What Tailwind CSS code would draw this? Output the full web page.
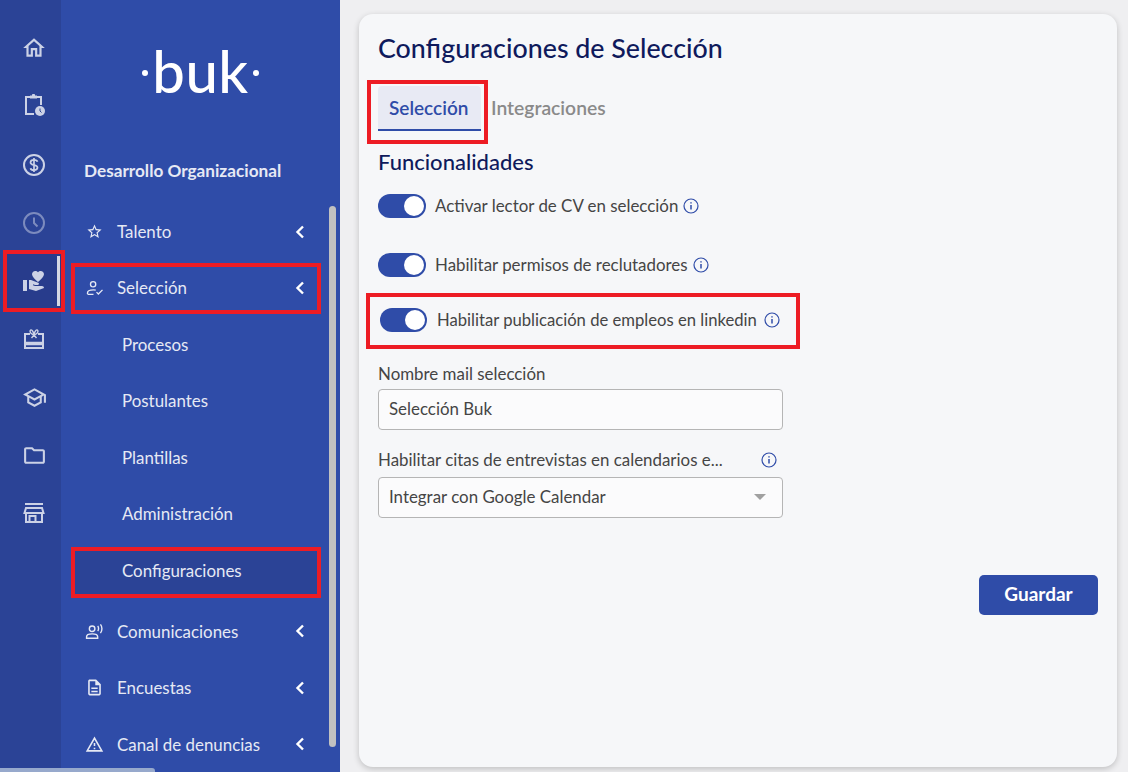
<!DOCTYPE html>
<html lang="es">
  <head>
    <meta charset="UTF-8" />
    <title>Configuraciones de Selección</title>
    <script src="https://cdn.jsdelivr.net/npm/@tailwindcss/browser@4"></script>
  </head>
  <body class="font-[Lato,sans-serif] bg-[#efeff1] overflow-hidden">
    <div class="relative flex w-[1128px] h-[772px] overflow-hidden">
      <!-- icon rail -->
      <aside class="w-[61px] h-full shrink-0 bg-[#2b4396] pl-[7px] pt-[20px] text-[#ccd2e6] flex flex-col">
        <div class="h-[56px] flex items-center justify-center">
          <svg class="w-[26px] h-[26px] fill-current" viewBox="0 0 24 24"><path d="M12 5.69l5 4.5V18h-2v-6H9v6H7v-7.81l5-4.5M12 3L2 12h3v8h6v-6h2v6h6v-8h3L12 3z" /></svg>
        </div>
        <div class="h-[58px] flex items-center justify-center">
          <svg class="w-[24px] h-[24px]" viewBox="0 0 24 24" fill="none" stroke="currentColor" stroke-width="2"><path d="M12 21H4V4h15v8" /><path d="M8 5V3h2.500V1.500h2V3H15v2z" fill="currentColor" stroke-width="1" /><circle cx="18" cy="18" r="5" fill="currentColor" stroke="none" /><path d="M18 15.500V18l1.500 1.500" stroke="#2b4396" stroke-width="1" /></svg>
        </div>
        <div class="mt-[2px] h-[58px] flex items-center justify-center">
          <svg class="w-[24px] h-[24px]" viewBox="0 0 24 24" fill="none" stroke="currentColor" stroke-width="2"><circle cx="12" cy="12" r="10" /><path d="M15.500 8.800c-.3-1.200-1.600-2-3.500-2-2 0-3.500 1-3.500 2.600 0 3.600 7 1.700 7 5.200 0 1.600-1.500 2.600-3.500 2.600-1.900 0-3.200-.8-3.500-2M12 5v14" stroke-width="1.700" /></svg>
        </div>
        <div class="h-[58px] flex items-center justify-center opacity-50">
          <svg class="w-[24px] h-[24px]" viewBox="0 0 24 24" fill="none" stroke="currentColor" stroke-width="2"><circle cx="12" cy="12" r="10" /><path d="M12 6.500V12l3.500 3.500" /></svg>
        </div>
        <div class="relative h-[58px] flex items-center justify-center bg-[#283c8c]">
          <svg class="w-[24px] h-[24px] fill-current" viewBox="0 0 24 24"><path d="M1 11h4v11H1zm15-7.750C16.650 2.490 17.660 2 18.700 2 20.550 2 22 3.450 22 5.300c0 2.270-2.910 4.900-6 7.700-3.080-2.810-6-5.440-6-7.700C10 3.450 11.450 2 13.300 2c1.040 0 2.050.49 2.700 1.250zM20 17h-7l-2.090-.73.33-.94L13 16h2.820c.65 0 1.180-.53 1.180-1.180 0-.49-.31-.93-.77-1.110L8.970 11H7v9.020L14 22l8.010-3c-.01-1.100-.9-2-2.010-2z" /></svg>
          <span class="absolute right-[1px] top-[4px] bottom-[4px] w-[3px] bg-[#d5d8e4]"></span>
        </div>
        <div class="h-[58px] flex items-center justify-center">
          <svg class="w-[24px] h-[24px]" viewBox="0 0 24 24" fill="none" stroke="currentColor" stroke-width="2"><path d="M8 7H3v14h18V7h-5" /><path d="M3 16.500h18" stroke-width="3.500" /><path d="M12 8C9.500 7 7.500 5.500 8.200 3.500 9 1.800 11.500 3.500 12 8c.5-4.500 3-6.200 3.800-4.500C16.500 5.500 14.500 7 12 8zM12 8l-2.500 3M12 8l2.500 3" stroke-width="1.400" /></svg>
        </div>
        <div class="h-[58px] flex items-center justify-center">
          <svg class="w-[25px] h-[25px] fill-current" viewBox="0 0 24 24"><path d="M12 3L1 9l4 2.180v6L12 21l7-3.820v-6l2-1.090V17h2V9L12 3zm6.820 6L12 12.720 5.180 9 12 5.280 18.820 9zM17 15.990l-5 2.730-5-2.730v-3.720L12 15l5-2.730v3.720z" /></svg>
        </div>
        <div class="h-[58px] flex items-center justify-center">
          <svg class="w-[25px] h-[25px] fill-current" viewBox="0 0 24 24"><path d="M9.170 6l2 2H20v10H4V6h5.170M10 4H4c-1.100 0-1.990.9-1.990 2L2 18c0 1.100.9 2 2 2h16c1.100 0 2-.9 2-2V8c0-1.100-.9-2-2-2h-8l-2-2z" /></svg>
        </div>
        <div class="h-[58px] flex items-center justify-center">
          <svg class="w-[24px] h-[24px]" viewBox="0 0 24 24" fill="none" stroke="currentColor" stroke-width="2"><path d="M3 3h18" /><path d="M4 7h16l1.500 5H2.500zM4 12v9h16v-9M13.500 21v-6h-6v6" /></svg>
        </div>
      </aside>

      <!-- sidebar -->
      <nav class="relative w-[279px] h-full shrink-0 bg-[#2f4ca8] text-[#e6e9f4] text-[16.9px]">
        <div class="h-[143px] flex items-start justify-center pt-[31px] text-white">
          <span class="flex items-center leading-[80px] text-[58px] font-medium h-[80px]">
            <span class="w-[6px] h-[6px] rounded-full bg-white mr-[4px] mt-[3px]"></span>
            <span class="tracking-[0.5px]">buk</span>
            <span class="w-[6px] h-[6px] rounded-full bg-white ml-[4px] mt-[3px]"></span>
          </span>
        </div>
        <div class="h-[56px] flex items-center pl-[23px] font-bold text-[17.2px]">Desarrollo Organizacional</div>

        <div class="mt-[4.3px] ml-[14px] w-[250px]">
          <a class="h-[56.5px] flex items-center">
            <svg class="w-[17px] h-[17px] ml-[11px] mr-[14px] fill-current" viewBox="0 0 24 24"><path d="M22 9.240l-7.190-.62L12 2 9.190 8.630 2 9.240l5.460 4.730L5.820 21 12 17.270 18.180 21l-1.630-7.030L22 9.240zM12 15.400l-3.760 2.270 1-4.280-3.320-2.880 4.380-.38L12 6.100l1.710 4.040 4.380.38-3.320 2.880 1 4.280L12 15.400z" /></svg>
            <span class="flex-1">Talento</span>
            <svg class="w-[12px] h-[14px] mr-[19px] text-white" viewBox="0 0 12 14" fill="none" stroke="currentColor" stroke-width="2.400"><path d="M9 1.500L3.500 7 9 12.500" /></svg>
          </a>
          <a class="h-[56.5px] flex items-center">
            <svg class="w-[18px] h-[18px] ml-[11px] mr-[13px]" viewBox="0 0 24 24" fill="none" stroke="currentColor" stroke-width="1.800"><circle cx="9.500" cy="7" r="3.500" /><path d="M2 20v-1.500c0-2.500 4-4 8-4 1 0 2 .1 3 .3M2 20.500h8M14 17.500l2.500 2.500L22 14.500" /></svg>
            <span class="flex-1">Selección</span>
            <svg class="w-[12px] h-[14px] mr-[19px] text-white" viewBox="0 0 12 14" fill="none" stroke="currentColor" stroke-width="2.400"><path d="M9 1.500L3.500 7 9 12.500" /></svg>
          </a>
          <a class="h-[56.5px] flex items-center pl-[47px]">Procesos</a>
          <a class="h-[56.5px] flex items-center pl-[47px]">Postulantes</a>
          <a class="h-[56.5px] flex items-center pl-[47px]">Plantillas</a>
          <a class="h-[56.5px] flex items-center pl-[47px]">Administración</a>
          <div class="h-[56.5px] py-[5px]">
            <a class="h-full w-[243px] flex items-center pl-[47px] bg-[#2b4396]">Configuraciones</a>
          </div>
          <a class="mt-[4.2px] h-[56.5px] flex items-center">
            <svg class="w-[19px] h-[19px] ml-[10px] mr-[13px]" viewBox="0 0 24 24" fill="none" stroke="currentColor" stroke-width="1.800"><circle cx="9" cy="8.500" r="3.500" /><path d="M2 20.500v-2c0-2.500 3.500-3.500 7-3.500s7 1 7 3.500v2zM16 5c1.500 1.500 1.500 5 0 6.500M19.500 3c2.500 3 2.500 8 0 11" /></svg>
            <span class="flex-1">Comunicaciones</span>
            <svg class="w-[12px] h-[14px] mr-[19px] text-white" viewBox="0 0 12 14" fill="none" stroke="currentColor" stroke-width="2.400"><path d="M9 1.500L3.500 7 9 12.500" /></svg>
          </a>
          <a class="h-[56.5px] flex items-center">
            <svg class="w-[19px] h-[19px] ml-[10px] mr-[13px] fill-current" viewBox="0 0 24 24"><path d="M8 16h8v2H8zm0-4h8v2H8zm6-10H6c-1.100 0-2 .9-2 2v16c0 1.100.89 2 1.990 2H18c1.100 0 2-.9 2-2V8l-6-6zm4 18H6V4h7v5h5v11z" /></svg>
            <span class="flex-1">Encuestas</span>
            <svg class="w-[12px] h-[14px] mr-[19px] text-white" viewBox="0 0 12 14" fill="none" stroke="currentColor" stroke-width="2.400"><path d="M9 1.500L3.500 7 9 12.500" /></svg>
          </a>
          <a class="h-[56.5px] flex items-center">
            <svg class="w-[19px] h-[19px] ml-[10px] mr-[13px] fill-current" viewBox="0 0 24 24"><path d="M12 5.990L19.530 19H4.470L12 5.990M12 2L1 21h22L12 2zm1 14h-2v2h2v-2zm0-6h-2v4h2v-4z" /></svg>
            <span class="flex-1">Canal de denuncias</span>
            <svg class="w-[12px] h-[14px] mr-[19px] text-white" viewBox="0 0 12 14" fill="none" stroke="currentColor" stroke-width="2.400"><path d="M9 1.500L3.500 7 9 12.500" /></svg>
          </a>
        </div>

        <!-- sidebar scrollbar -->
        <span class="absolute left-[268px] top-[206px] w-[7px] h-[541px] rounded-full bg-[#c1c1c1]"></span>
      </nav>

      <!-- main -->
      <main class="flex-1 pl-[19px] pr-[11px] pt-[14px] pb-[5px]">
        <section class="h-full rounded-[14px] bg-[#f6f7f9] shadow-[0_2px_6px_rgba(0,0,0,0.2)] pl-[19px] pr-[19px] text-[16.9px] text-[#454545] flex flex-col">
          <h1 class="mt-[16px] h-[36px] leading-[36px] text-[26.800px] font-medium text-[#0f1a5c]">Configuraciones de Selección</h1>
          <div class="mt-[20px] flex items-center">
            <div class="w-[103px] h-[45px] pl-[11px] pt-[2px] flex items-center rounded-t-[4px] bg-[#e8eaf4] border-b-2 border-[#2f4ca8] text-[19px] font-semibold text-[#2f4ca8]">Selección</div>
            <div class="ml-[10px] text-[19.300px] font-semibold text-[#8a8a8a]">Integraciones</div>
          </div>
          <h2 class="mt-[17px] h-[28px] leading-[28px] text-[22px] font-medium text-[#0f1a5c]">Funcionalidades</h2>

          <div class="mt-[18px] flex items-center h-[24px]">
            <span class="relative w-[48px] h-[24px] rounded-full bg-[#2f4ca8] shrink-0"><span class="absolute right-[2px] top-[2px] w-[20px] h-[20px] rounded-full bg-white"></span></span>
            <span class="ml-[9px]">Activar lector de CV en selección</span>
            <svg class="ml-[5px] w-[16px] h-[16px] text-[#2f4ca8]" viewBox="0 0 16 16" fill="none" stroke="currentColor" stroke-width="1.200"><circle cx="8" cy="8" r="7" /><path d="M8 7v4.500" stroke-width="1.500" /><path d="M8 4.200v1.300" stroke-width="1.500" /></svg>
          </div>
          <div class="mt-[35px] flex items-center h-[24px]">
            <span class="relative w-[48px] h-[24px] rounded-full bg-[#2f4ca8] shrink-0"><span class="absolute right-[2px] top-[2px] w-[20px] h-[20px] rounded-full bg-white"></span></span>
            <span class="ml-[9px]">Habilitar permisos de reclutadores</span>
            <svg class="ml-[5px] w-[16px] h-[16px] text-[#2f4ca8]" viewBox="0 0 16 16" fill="none" stroke="currentColor" stroke-width="1.200"><circle cx="8" cy="8" r="7" /><path d="M8 7v4.500" stroke-width="1.500" /><path d="M8 4.200v1.300" stroke-width="1.500" /></svg>
          </div>
          <div class="mt-[31px] ml-[2px] flex items-center h-[24px]">
            <span class="relative w-[47px] h-[24px] rounded-full bg-[#2f4ca8] shrink-0"><span class="absolute right-[2px] top-[2px] w-[20px] h-[20px] rounded-full bg-white"></span></span>
            <span class="ml-[10px] text-[16.650px]">Habilitar publicación de empleos en linkedin</span>
            <svg class="ml-[7px] w-[16px] h-[16px] text-[#2f4ca8]" viewBox="0 0 16 16" fill="none" stroke="currentColor" stroke-width="1.200"><circle cx="8" cy="8" r="7" /><path d="M8 7v4.500" stroke-width="1.500" /><path d="M8 4.200v1.300" stroke-width="1.500" /></svg>
          </div>

          <label class="mt-[30px] h-[24px] leading-[24px] block">Nombre mail selección</label>
          <div class="mt-[3px] w-[405px] h-[41px] px-[10px] pb-[2px] flex items-center rounded-[4px] border border-[#b5b5b5] bg-[#fbfbfc]">Selección Buk</div>

          <div class="mt-[18px] w-[405px] h-[24px] flex items-center justify-between">
            <span>Habilitar citas de entrevistas en calendarios e...</span>
            <svg class="mr-[6px] w-[16px] h-[16px] text-[#2f4ca8]" viewBox="0 0 16 16" fill="none" stroke="currentColor" stroke-width="1.200"><circle cx="8" cy="8" r="7" /><path d="M8 7v4.500" stroke-width="1.500" /><path d="M8 4.200v1.300" stroke-width="1.500" /></svg>
          </div>
          <div class="mt-[5px] w-[405px] h-[41px] pl-[10px] pr-[16px] pb-[2px] flex items-center justify-between rounded-[4px] border border-[#b5b5b5] bg-[#fbfbfc]">
            <span>Integrar con Google Calendar</span>
            <span class="w-0 h-0 border-x-[6px] border-x-transparent border-t-[6px] border-t-[#a0a0a0]"></span>
          </div>

          <div class="mt-[57px] flex justify-end">
            <button class="w-[119px] h-[40px] pb-[2px] rounded-[5px] bg-[#2f4ca8] text-white text-[19px] font-bold">Guardar</button>
          </div>
        </section>
      </main>

      <!-- bottom scrollbar -->
      <span class="absolute left-0 bottom-0 w-[155px] h-[4px] rounded-tr-[3px] bg-[#97a9cc]"></span>

      <!-- red annotation boxes over the screenshot -->
      <span class="absolute left-[3px] top-[250px] w-[62px] h-[62px] border-[4px] border-[#ed1c24]"></span>
      <span class="absolute left-[71px] top-[263px] w-[250px] h-[51px] border-[4px] border-[#ed1c24]"></span>
      <span class="absolute left-[71px] top-[547px] w-[250px] h-[51px] border-[4px] border-[#ed1c24]"></span>
      <span class="absolute left-[367px] top-[80px] w-[121px] h-[64px] border-[4px] border-[#ed1c24]"></span>
      <span class="absolute left-[366px] top-[293px] w-[434px] h-[56px] border-[4px] border-[#ed1c24]"></span>
    </div>
  </body>
</html>
